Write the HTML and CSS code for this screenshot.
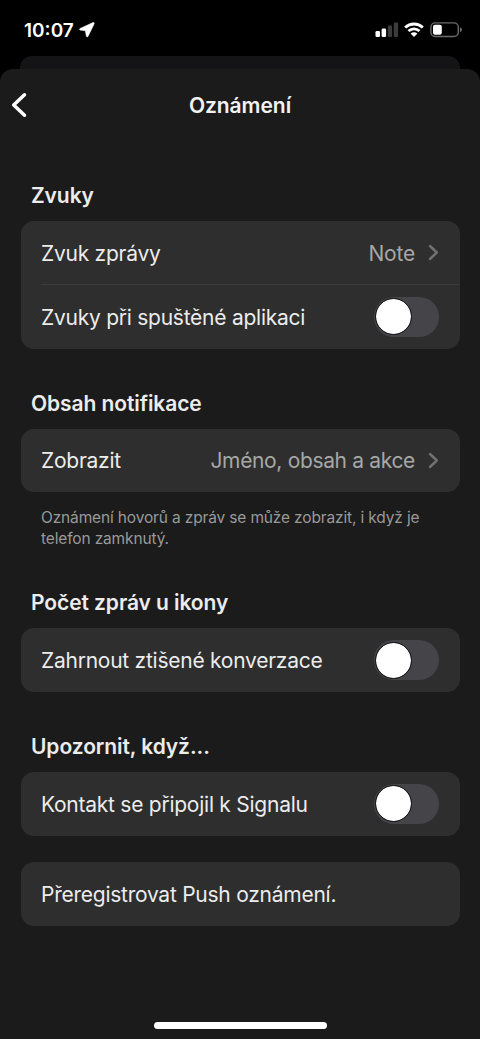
FILE: index.html
```html
<!DOCTYPE html>
<html lang="cs">
<head>
<meta charset="utf-8">
<title>Oznámení</title>
<link rel="stylesheet" href="styles.css">
</head>
<body>
<div class="phone">
  <header class="status">
    <span class="time">10:07</span>
    <svg class="location" width="16" height="16" viewBox="0 0 16 16"><path d="M14 .5 1 6.500Q0 7.200 .8 8L6.300 8.800 7.300 14.200Q8 15.500 9 14.500L15.200 1.800Q15.400 .1 14 .5Z" fill="#fff" stroke="#fff" stroke-width=".5" stroke-linejoin="round"/></svg>
    <svg class="signal" width="24" height="16" viewBox="0 0 24 16"><g fill="#fff"><rect x=".5" y="9" width="4.500" height="6" rx="1.300"/><rect x="6.600" y="6.600" width="4.500" height="8.400" rx="1.300"/></g><g fill="#3b3b3b"><rect x="12.800" y="3.600" width="4.300" height="11.400" rx="1.200"/><rect x="18.800" y=".6" width="4.300" height="14.400" rx="1.200"/></g></svg>
    <svg class="wifi" width="20" height="16" viewBox="0 0 20 16"><g fill="none" stroke="#fff" stroke-width="2.900"><path d="M1.200 5.500C6.200 .8 13.800 .8 18.800 5.500"/><path d="M4.500 9C7.700 6.100 12.300 6.100 15.500 9"/></g><path d="M6.600 11.500C8.600 9.900 11.400 9.900 13.400 11.500L10 15Z" fill="#fff"/></svg>
    <svg class="battery" width="32" height="16" viewBox="0 0 32 16"><rect x=".9" y=".9" width="27.400" height="13.600" rx="4.200" fill="none" stroke="#6b6b6b" stroke-width="1.400"/><rect x="3" y="2.700" width="8.800" height="10" rx="2" fill="#fff"/><path d="M30 5.200Q32 6 32 7.700T30 10.200Z" fill="#6b6b6b"/></svg>
  </header>
  <div class="behind"></div>
  <main class="sheet">
    <nav class="nav">
      <svg class="back" width="16" height="26" viewBox="0 0 16 26"><path d="M13.500 2.800 2.700 13l10.800 10.200" fill="none" stroke="#fff" stroke-width="3.500" stroke-linecap="round" stroke-linejoin="round"/></svg>
      <h1 class="title">Oznámení</h1>
    </nav>

    <section class="group">
      <h2 class="heading">Zvuky</h2>
      <div class="card">
        <div class="row"><span class="label">Zvuk zprávy</span><span class="value value-short">Note</span><svg class="chevron" width="11" height="17" viewBox="0 0 11 17"><path d="M2 2l6.800 6.500L2 15"/></svg></div>
        <div class="row divided"><span class="label">Zvuky při spuštěné aplikaci</span><span class="switch"><span class="knob"></span></span></div>
      </div>
    </section>

    <section class="group">
      <h2 class="heading">Obsah notifikace</h2>
      <div class="card">
        <div class="row"><span class="label">Zobrazit</span><span class="value">Jméno, obsah a akce</span><svg class="chevron" width="11" height="17" viewBox="0 0 11 17"><path d="M2 2l6.800 6.500L2 15"/></svg></div>
      </div>
      <p class="note">Oznámení hovorů a zpráv se může zobrazit, i když je<br>telefon zamknutý.</p>
    </section>

    <section class="group">
      <h2 class="heading">Počet zpráv u ikony</h2>
      <div class="card">
        <div class="row"><span class="label">Zahrnout ztišené konverzace</span><span class="switch"><span class="knob"></span></span></div>
      </div>
    </section>

    <section class="group">
      <h2 class="heading">Upozornit, když...</h2>
      <div class="card">
        <div class="row"><span class="label">Kontakt se připojil k Signalu</span><span class="switch"><span class="knob"></span></span></div>
      </div>
    </section>

    <section class="group last">
      <div class="card">
        <div class="row"><span class="label">Přeregistrovat Push oznámení.</span></div>
      </div>
    </section>
    <div class="home"></div>
  </main>
</div>
</body>
</html>
```
FILE: styles.css
```css
* { box-sizing: border-box; }
body { margin: 0; background: #000; color: #ececec; font-family: Inter, "Noto Sans", sans-serif; }
h1, h2, p { margin: 0; }
svg { display: block; flex: none; }
.phone { width: 480px; height: 1039px; display: flex; flex-direction: column; overflow: hidden; background: #000; }
.status { height: 56px; display: flex; align-items: flex-start; padding: 22px 18px 0 24px; }
.time { font-size: 19px; line-height: 18px; font-weight: 600; color: #fff; width: 55px; white-space: nowrap; }
.signal { margin-left: auto; }
.wifi { margin-left: 5px; }
.battery { margin-left: 6px; }
.behind { height: 13px; margin: 0 20px; background: #141416; border-radius: 12px 12px 0 0; }
.sheet { flex: 1; display: flex; flex-direction: column; background: #1b1b1b; border-radius: 13px 13px 0 0; padding: 0 20.500px; }
.nav { height: 72px; display: grid; grid-template-columns: 40px 1fr 40px; align-items: center; margin: 0 -10px; }
.title { font-size: 21px; line-height: 26px; font-weight: 600; text-align: center; color: #f2f2f2; padding-top: 2px; letter-spacing: -.05px; }
.group { display: flex; flex-direction: column; }
.heading { font-size: 21px; line-height: 26px; font-weight: 600; padding: 42px 10.500px 12px; white-space: nowrap; letter-spacing: -.08px; }
.card { background: #2e2e2e; border-radius: 13px; overflow: hidden; }
.row { height: 63.750px; display: flex; align-items: center; padding: 2px 20.500px 0; position: relative; white-space: nowrap; }
.divided::before { content: ""; position: absolute; left: 20px; right: 0; top: -1px; height: 1px; background: #3b3b3b; }
.label { font-size: 21px; line-height: 26px; flex: 1; letter-spacing: -.25px; }
.value { font-size: 21px; line-height: 26px; color: #a7a7a7; letter-spacing: -.34px; }
.value-short { letter-spacing: -.2px; }
.chevron { margin: -2px 0 0 13px; }
.chevron path { fill: none; stroke: #707070; stroke-width: 2.500; stroke-linecap: round; stroke-linejoin: round; }
.switch { width: 65px; height: 40px; margin-top: -2px; border-radius: 20px; background: #454549; display: flex; align-items: center; padding-left: 1px; }
.knob { width: 37px; height: 37px; border-radius: 50%; background: #fff; border: 1px solid #171717; background-clip: padding-box; }
.note { font-size: 15.500px; line-height: 20.500px; color: #999; padding: 16px 20.500px 0; margin-bottom: -1px; white-space: nowrap; letter-spacing: -.15px; }
.last { padding-top: 26px; }
.home { width: 173px; height: 7px; border-radius: 4px; background: #fff; margin: auto auto 10px; }
```
